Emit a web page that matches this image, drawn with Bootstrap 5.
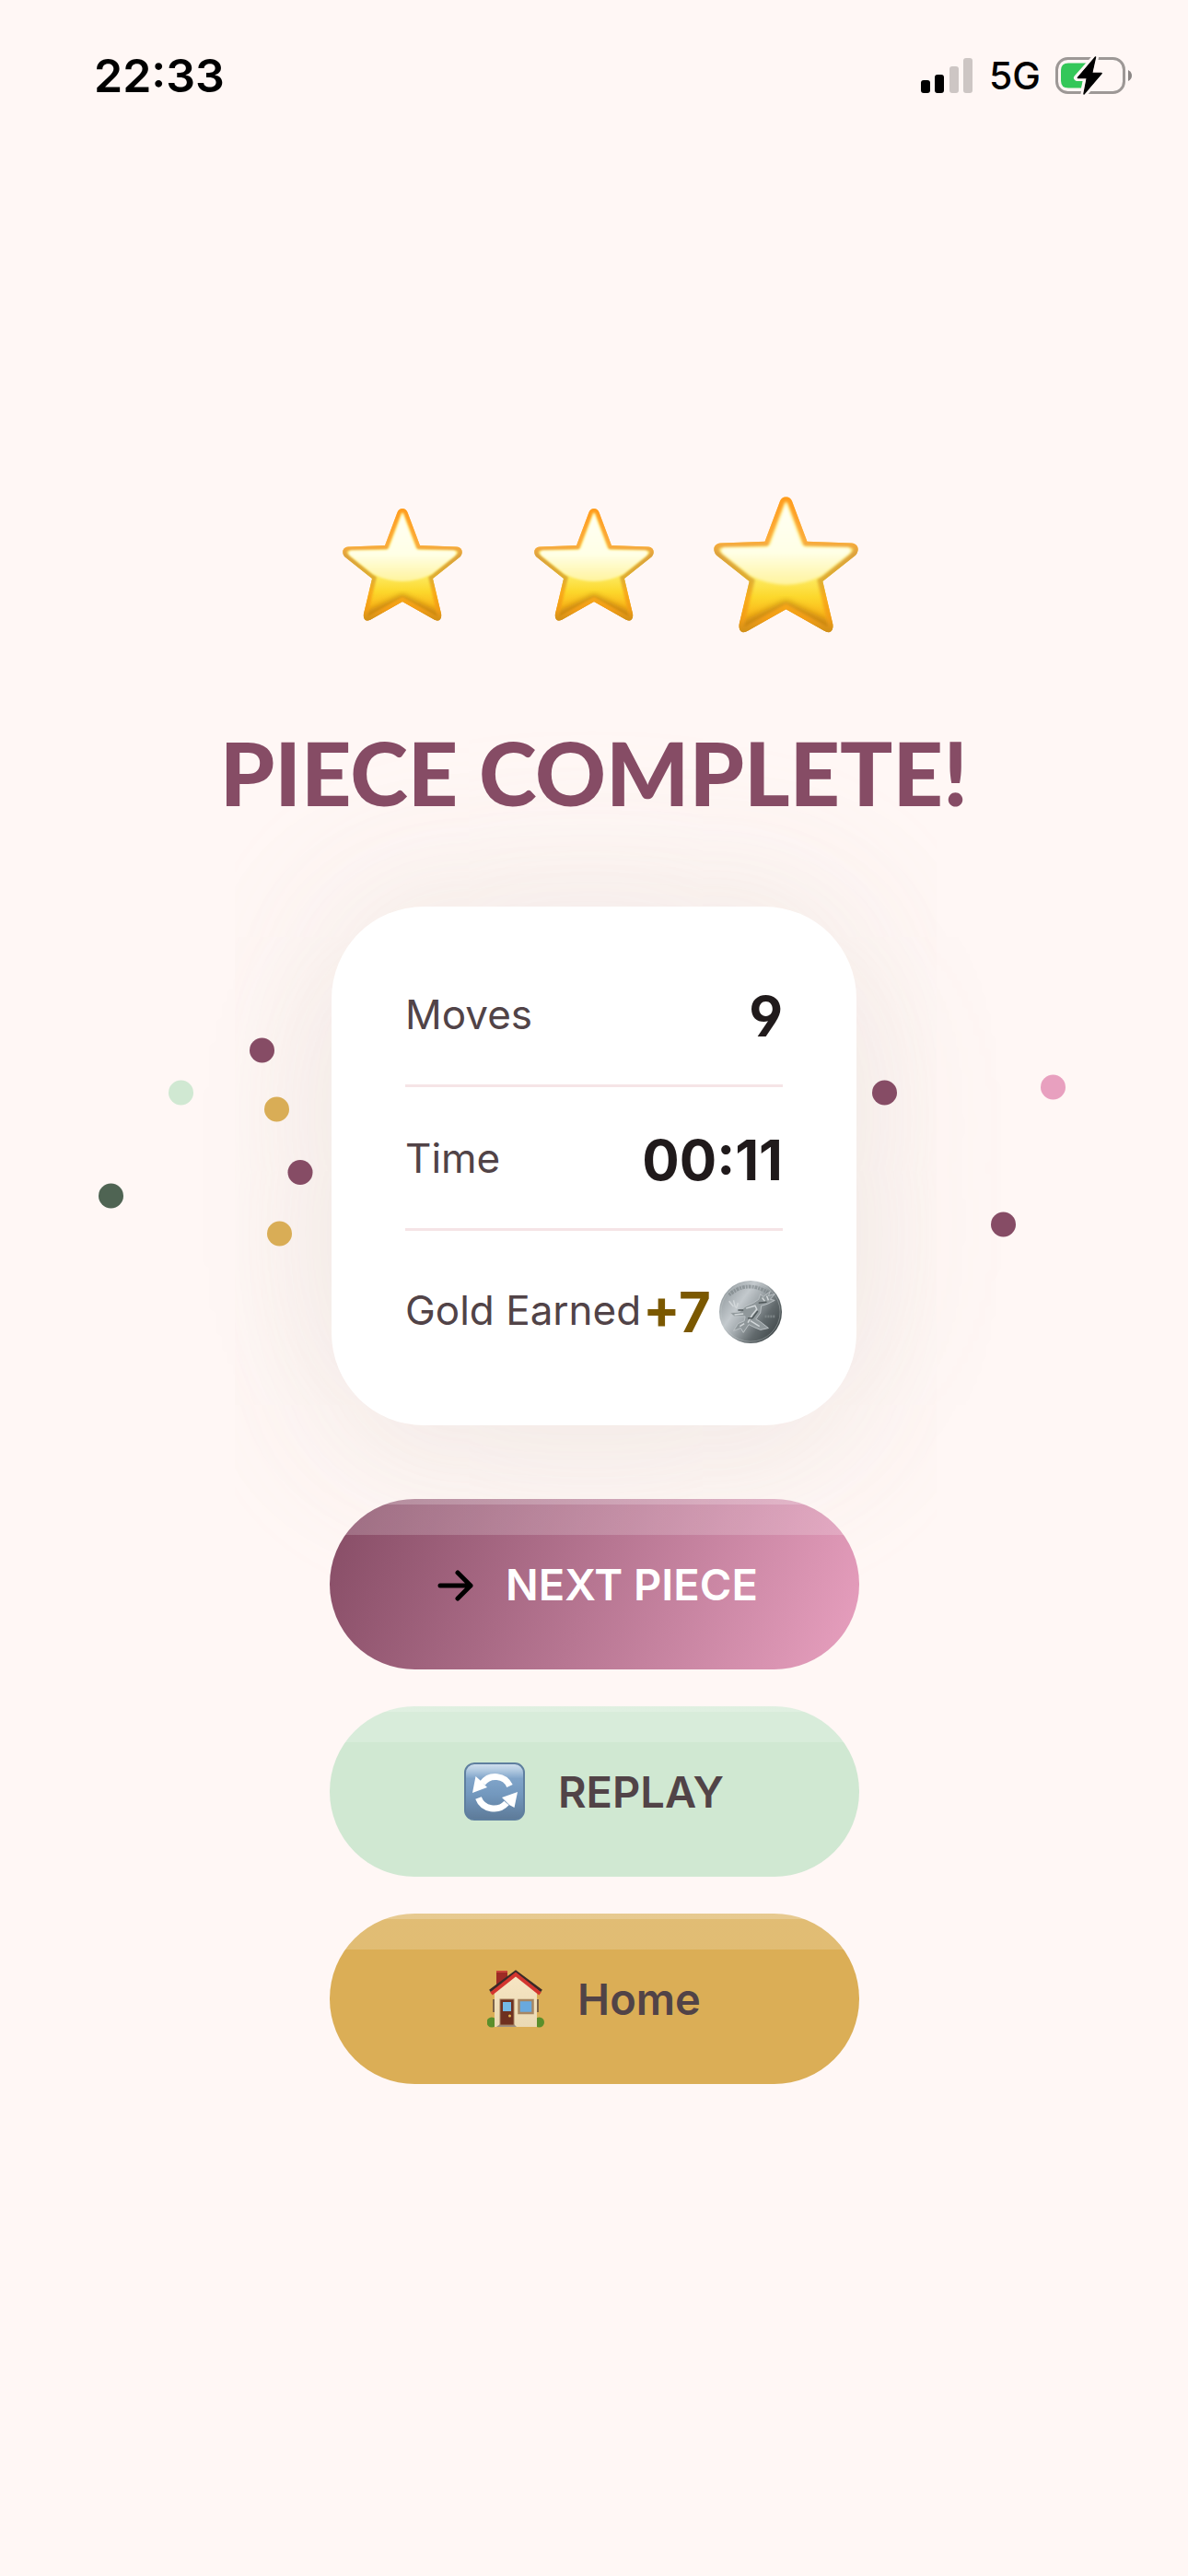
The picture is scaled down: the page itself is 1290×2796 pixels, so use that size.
<!DOCTYPE html>
<html lang="en">
<head>
<meta charset="utf-8">
<meta name="viewport" content="width=device-width, initial-scale=1">
<title>Piece Complete</title>
<link href="https://cdn.jsdelivr.net/npm/bootstrap@5.3.0/dist/css/bootstrap.min.css" rel="stylesheet">
<style>
  body { background: #fff7f5; font-family: Inter, "Liberation Sans", sans-serif; color: #201a1b; overflow-x: hidden; }
  svg { display: block; flex: none; }
  .status-bar { height: 164px; padding: 0 60px 0 102px; color: #000; }
  .status-time { font-size: 50px; font-weight: 600; line-height: 64px; }
  .status-net { margin: 0 16px 0 18px; font-size: 41px; font-weight: 500; line-height: 48px; }
  .result { padding-bottom: 164px; }
  .star-row { height: 158px; }
  .star-cell { width: 208px; }
  .headline { margin: 90px 0; font-family: Lato, Inter, sans-serif; font-size: 95px; font-weight: 900; line-height: 112px; color: #864c65; text-align: center; }
  .summary-wrap { margin-bottom: 80px; }
  .confetti { left: 50%; top: 50%; transform: translate(-50%, -50%); z-index: 2; pointer-events: none; }
  .summary { z-index: 1; width: 570px; padding: 40px 80px; border: 0; border-radius: 100px; background: #fff; box-shadow: 0 12px 180px rgba(100, 75, 68, .13), 0 12px 300px rgba(255, 252, 246, .7); }
  .stat { height: 156px; border-bottom: 3px solid #f5e4e6; }
  .stat:last-child { height: 171px; border-bottom: 0; }
  .stat dt { font-size: 44px; font-weight: 400; line-height: 56px; color: #514347; white-space: nowrap; }
  .stat dd { margin: 0; padding-top: 4px; font-size: 60px; font-weight: 700; line-height: 72px; font-feature-settings: "ss01"; white-space: nowrap; }
  .stat .earned { color: #7b5800; gap: 8px; }
  .actions { position: relative; z-index: 2; width: 575px; gap: 40px; }
  .btn-pill { --bs-btn-border-width: 0; --bs-btn-padding-y: 0; --bs-btn-font-size: 47px; --bs-btn-font-weight: 600; --bs-btn-color: #514347; --bs-btn-hover-color: #514347; --bs-btn-active-color: #514347;
    height: 185px; gap: 36px; border-radius: 96px; line-height: 56px;
    background-image: linear-gradient(rgba(255,255,255,.2) 6px, transparent 6px), linear-gradient(rgba(255,255,255,.18) 39px, transparent 39px), var(--pill-fill); }
  .btn-next { --pill-fill: linear-gradient(112deg, #864c65, #e8a0bf); --bs-btn-color: #fff; --bs-btn-hover-color: #fff; --bs-btn-active-color: #fff; gap: 28px; }
  .btn-replay { --pill-fill: linear-gradient(#d0e8d2, #d0e8d2); }
  .btn-home { --pill-fill: linear-gradient(#dbae56, #dbae56); }
</style>
</head>
<body class="d-flex flex-column min-vh-100">
<svg width="0" height="0" class="position-absolute" aria-hidden="true">
  <defs>
    <linearGradient id="starBody" x1="0" y1="0" x2="0" y2="1">
      <stop offset="0" stop-color="#fff3a0"/><stop offset=".6" stop-color="#fdea60"/><stop offset=".74" stop-color="#fcd82c"/><stop offset=".87" stop-color="#fbb81a"/><stop offset="1" stop-color="#f0a21a"/>
    </linearGradient>
    <linearGradient id="starRim" x1="0" y1="0" x2="0" y2="1">
      <stop offset="0" stop-color="#ff9c1c"/><stop offset=".33" stop-color="#fbac3c"/><stop offset=".42" stop-color="#dda23c"/><stop offset=".62" stop-color="#dfae30"/><stop offset=".75" stop-color="#f9ab1a"/><stop offset=".9" stop-color="#f29d16"/><stop offset="1" stop-color="#d08f18"/>
    </linearGradient>
    <linearGradient id="starGloss" x1="0" y1="0" x2="0" y2="1">
      <stop offset="0" stop-color="#fffff4"/><stop offset=".6" stop-color="#ffffe6"/><stop offset="1" stop-color="#fff39c"/>
    </linearGradient>
    <filter id="soft1"><feGaussianBlur stdDeviation="1.2"/></filter>
    <filter id="soft2"><feGaussianBlur stdDeviation="3"/></filter>
    <path id="starShape" d="M59.500 4C61.500-1.300 68.500-1.300 70.500 4L84 40L124 41.500C130 42 131.500 48 127.500 52.500L98 76L107 114C108 120 104.500 123.500 99.500 120.500L65 101L30.500 120.500C25.500 123.500 22 120 23 114L32 76L2.500 52.500C-1.500 48 0 42 6 41.500L46 40Z"/>
    <clipPath id="starClip"><use href="#starShape"/></clipPath>
    <symbol id="star" viewBox="0 0 130 122">
      <g clip-path="url(#starClip)">
        <use href="#starShape" fill="url(#starBody)"/>
        <path d="M20 126L65 102L110 126L105 112L65 93L25 112Z" fill="#b9780f" opacity=".75" filter="url(#soft2)"/>
        <use href="#starShape" fill="none" stroke="url(#starRim)" stroke-width="9" filter="url(#soft1)"/>
        <path d="M65 6L79 42Q80 45 84 45L121 45.500Q125 47 122 51L97 71Q65 87 33 71L8 51Q5 47 9 45.500L46 45Q50 45 51 42Z" fill="url(#starGloss)" filter="url(#soft1)"/>
        <use href="#starShape" fill="none" stroke="url(#starRim)" stroke-width="3" opacity=".6"/>
      </g>
    </symbol>
  </defs>
</svg>

<header class="status-bar d-flex align-items-center justify-content-between">
  <span class="status-time">22:33</span>
  <div class="d-flex align-items-center">
    <svg width="56" height="38" viewBox="0 0 56 38" role="img" aria-label="Signal"><rect y="24" width="10" height="14" rx="3"/><rect x="15" y="18" width="10" height="20" rx="3"/><g fill="#cdc6c4"><rect x="31" y="9" width="10" height="29" rx="3"/><rect x="46" width="10" height="38" rx="3"/></g></svg>
    <span class="status-net">5G</span>
    <svg width="84" height="42" viewBox="0 0 84 42" role="img" aria-label="Battery charging">
      <rect x="1.500" y="2.500" width="73" height="37" rx="12" fill="none" stroke="#9d9896" stroke-width="3"/>
      <path d="M79 15Q83 17 83 21T79 27Z" fill="#8b8685"/>
      <path d="M34 7.500H14Q6 7.500 6 15.500V26.500Q6 34.500 14 34.500H28Z" fill="#34c759"/>
      <path d="M43.500 1L23.500 23.500H34L31 41L51 18.500H40Z" fill="#000" stroke="#fff7f5" stroke-width="7" stroke-linejoin="round" paint-order="stroke"/>
      <path d="M43.500 1L24.500 23.500H34.500L31 41L50 18.500H39.500Z" stroke="#000" stroke-width="1.500" stroke-linejoin="round"/>
    </svg>
  </div>
</header>

<main class="result flex-grow-1 d-flex flex-column align-items-center justify-content-center">
  <div class="star-row d-flex align-items-center" role="img" aria-label="Three stars">
    <div class="star-cell d-flex justify-content-center"><svg width="130" height="122"><use href="#star"/></svg></div>
    <div class="star-cell d-flex justify-content-center"><svg width="130" height="122"><use href="#star"/></svg></div>
    <div class="star-cell d-flex justify-content-center"><svg width="157" height="148"><use href="#star"/></svg></div>
  </div>

  <h1 class="headline position-relative z-2">PIECE COMPLETE!</h1>

  <div class="summary-wrap position-relative">
    <svg class="confetti position-absolute" width="1080" height="280" viewBox="0 0 1080 280" aria-hidden="true">
      <g fill="#864c65"><circle cx="179.500" cy="14" r="13.500"/><circle cx="221" cy="146.500" r="13.500"/><circle cx="855.500" cy="60" r="13.500"/><circle cx="984.500" cy="203" r="13.500"/></g>
      <g fill="#d9ad56"><circle cx="195.500" cy="78" r="13.500"/><circle cx="198.500" cy="213" r="13.500"/></g>
      <circle cx="91.500" cy="60" r="13.500" fill="#d0e8d2"/>
      <circle cx="15.500" cy="172" r="13.500" fill="#4f6453"/>
      <circle cx="1038.500" cy="54" r="13.500" fill="#e8a0bf"/>
    </svg>
    <dl class="summary card position-relative mb-0">
      <div class="stat d-flex align-items-center justify-content-between"><dt>Moves</dt><dd>9</dd></div>
      <div class="stat d-flex align-items-center justify-content-between"><dt>Time</dt><dd>00:11</dd></div>
      <div class="stat d-flex align-items-center justify-content-between"><dt>Gold Earned</dt>
        <dd class="earned d-flex align-items-center">+7
          <svg width="70" height="70" viewBox="0 0 72 72" role="img" aria-label="Silver coin">
            <defs><linearGradient id="coin" x1="0" y1=".2" x2="1" y2=".9"><stop offset="0" stop-color="#90989c"/><stop offset=".3" stop-color="#c3c9cd"/><stop offset=".45" stop-color="#a4abaf"/><stop offset=".68" stop-color="#626a6d"/><stop offset="1" stop-color="#353c3e"/></linearGradient></defs>
            <circle cx="36" cy="36" r="35" fill="url(#coin)"/>
            <circle cx="36" cy="36" r="33" fill="none" stroke="#c4cacc" opacity=".4"/>
            <path d="M12 17Q33-1 58 16" fill="none" stroke="#777f82" stroke-width="4" stroke-dasharray="2 1 3 1" opacity=".6"/>
            <path d="M13 37L24 36L30 30L39 26L45 22L47 16L50 19L58 13L56 18L63 16L58 22L63 23L55 27L48 29L47 37L42 44L47 47L56 54L47 56L40 53L34 50L28 59L25 54L17 57L22 49L29 46L30 41L18 41Z" fill="#8f979a" stroke="#bcc2c5" stroke-width="1"/>
            <path d="M31 32L41 29L43 33L38 39L33 48M49 20L52 24M54 18L56 23M18 39L28 38M36 46L46 52M24 52L29 49M12 24L17 30M17 23L19 31M22 26L20 32" fill="none" stroke="#d3d8da" stroke-width="1.500"/>
            <path d="M33 43L38 43L44 35M45 26L54 25M22 34L28 34" fill="none" stroke="#4f5759" stroke-width="1.500"/>
            <path d="M52 41H63" stroke="#7d8587" stroke-width="3" stroke-dasharray="2 1"/>
          </svg>
        </dd>
      </div>
    </dl>
  </div>

  <div class="actions d-flex flex-column">
    <button type="button" class="btn btn-pill btn-next d-flex align-items-center justify-content-center">
      <svg width="54" height="54" viewBox="0 0 54 54" aria-hidden="true"><path d="M11 28H44M30 14L44 28L30 42" fill="none" stroke="#000" stroke-width="5" stroke-linecap="round" stroke-linejoin="round"/></svg>
      <span>NEXT PIECE</span>
    </button>
    <button type="button" class="btn btn-pill btn-replay d-flex align-items-center justify-content-center">
      <svg width="66" height="63" viewBox="0 0 66 63" aria-hidden="true">
        <defs><linearGradient id="tile" x1="0" y1="0" x2="0" y2="1"><stop offset="0" stop-color="#d3e1ef"/><stop offset=".1" stop-color="#b9cfe4"/><stop offset=".27" stop-color="#80a4c9"/><stop offset=".55" stop-color="#7398be"/><stop offset="1" stop-color="#5d7a98"/></linearGradient></defs>
        <rect x="1" y="1" width="64" height="61" rx="10" fill="url(#tile)" stroke="#5f7f9f" stroke-width="2"/>
        <path d="M20 22.500A17 16.500 0 0 1 49.500 25.500M15.500 38.500A18 17.500 0 0 0 46 44" fill="none" stroke="#fff" stroke-width="7"/>
        <path d="M9 33L12.500 15L17 19L25 27Z M58 32L54.500 49L49 46L41 38Z" fill="#fff"/>
      </svg>
      <span>REPLAY</span>
    </button>
    <button type="button" class="btn btn-pill btn-home d-flex align-items-center justify-content-center">
      <svg width="62" height="63" viewBox="0 0 62 63" aria-hidden="true">
        <defs><linearGradient id="wall" x1="0" y1="0" x2="0" y2="1"><stop offset="0" stop-color="#f7e6c4"/><stop offset="1" stop-color="#ead9b4"/></linearGradient></defs>
        <path d="M10 1H22V12L10 22Z" fill="#9d2a25"/><path d="M10 1H22V3H10Z" fill="#c84338"/>
        <circle cx="5" cy="57" r="5.500" fill="#5b8f2b"/><circle cx="56.500" cy="57" r="5.500" fill="#5b8f2b"/>
        <path d="M8 24L31 5L54 24V62H8Z" fill="url(#wall)"/>
        <path d="M7 32V46M55 32V46" stroke="#7d6348" stroke-width="2"/>
        <path d="M3 23L31 2L59 23" fill="none" stroke="#3a2a28" stroke-width="3"/>
        <path d="M4.500 26L31 5L57.500 26" fill="none" stroke="#d3352f" stroke-width="4"/>
        <path d="M10 62L14 59H29L32 62Z" fill="#9b8f82"/>
        <rect x="14" y="32" width="15" height="28" fill="#6e3020" stroke="#a17c5c"/>
        <rect x="17" y="35" width="9" height="10" fill="#74b9e6"/><circle cx="24.500" cy="50" r="1.500" fill="#e5b450"/>
        <rect x="34.500" y="33" width="15" height="14" fill="#69a9de" stroke="#a78662" stroke-width="2.500"/>
      </svg>
      <span>Home</span>
    </button>
  </div>
</main>
<script src="https://cdn.jsdelivr.net/npm/bootstrap@5.3.0/dist/js/bootstrap.bundle.min.js"></script>
</body>
</html>
